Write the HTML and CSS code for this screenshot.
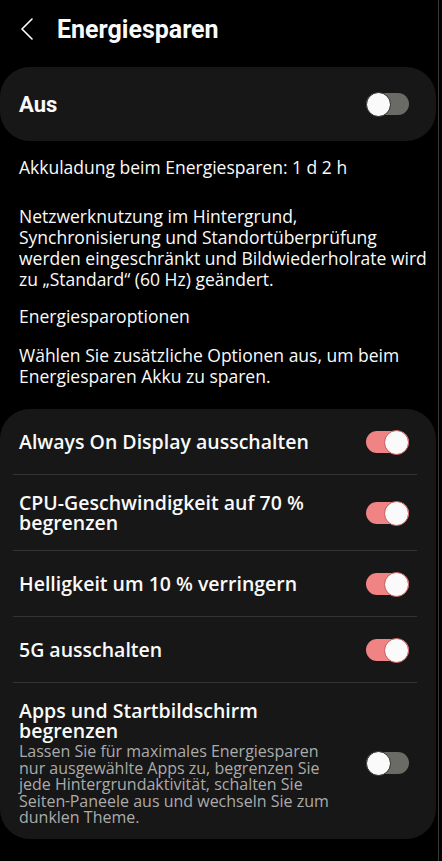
FILE: index.html
```html
<!DOCTYPE html>
<html lang="de">
<head>
  <meta charset="UTF-8" />
  <meta name="viewport" content="width=device-width, initial-scale=1.0" />
  <title>Energiesparen</title>
  <link rel="stylesheet" href="styles.css">
</head>
<body>
  <div class="screen">
    <header class="topbar">
      <svg class="back" width="14" height="22" viewBox="0 0 14 22">
        <path d="M12 1 L2 11 L12 21" fill="none" stroke="#fff" stroke-width="1.6" stroke-linecap="round" stroke-linejoin="round"/>
      </svg>
      <h1>Energiesparen</h1>
    </header>

    <div class="card master">
      <span class="master-label">Aus</span>
      <span class="switch"></span>
    </div>

    <div class="info">
      <p class="charge">Akkuladung beim Energiesparen: 1 d 2 h</p>
      <p class="desc">Netzwerknutzung im Hintergrund, Synchronisierung und Standortüberprüfung werden eingeschränkt und Bildwiederholrate wird zu „Standard“ (60 Hz) geändert.</p>
      <p class="heading">Energiesparoptionen</p>
      <p>Wählen Sie zusätzliche Optionen aus, um beim Energiesparen Akku zu sparen.</p>
    </div>

    <div class="card options">
      <div class="row">
        <div class="row-text"><div class="row-title">Always On Display ausschalten</div></div>
        <span class="switch on"></span>
      </div>
      <div class="row">
        <div class="row-text"><div class="row-title">CPU-Geschwindigkeit auf 70 % begrenzen</div></div>
        <span class="switch on"></span>
      </div>
      <div class="row">
        <div class="row-text"><div class="row-title">Helligkeit um 10 % verringern</div></div>
        <span class="switch on"></span>
      </div>
      <div class="row">
        <div class="row-text"><div class="row-title">5G ausschalten</div></div>
        <span class="switch on"></span>
      </div>
      <div class="row last">
        <div class="row-text">
          <div class="row-title">Apps und Startbildschirm begrenzen</div>
          <div class="row-sub">Lassen Sie für maximales Energiesparen nur ausgewählte Apps zu, begrenzen Sie jede Hintergrundaktivität, schalten Sie Seiten&#8209;Paneele aus und wechseln Sie zum dunklen Theme.</div>
        </div>
        <span class="switch"></span>
      </div>
    </div>
  </div>
</body>
</html>
```

FILE: styles.css
```css
body {
  margin: 0;
  padding: 0;
  background: #000;
  color: #fafafa;
  font-family: "Open Sans", Roboto, sans-serif;
}

.screen {
  width: 439px;
  min-height: 861px;
  border-right: 1px solid #3a3a3a;
  box-sizing: border-box;
}

.topbar {
  display: flex;
  align-items: center;
  height: 58px;
  padding-left: 20px;
}

.back {
  display: block;
  margin-right: 23px;
}

.topbar h1 {
  margin: 0;
  font-family: Roboto, sans-serif;
  font-size: 25px;
  font-weight: 700;
}

.card {
  background: #171717;
  border-radius: 30px;
  width: 436px;
}

.master {
  display: flex;
  align-items: center;
  justify-content: space-between;
  height: 74px;
  margin-top: 9px;
  padding: 0 27px 0 19px;
  box-sizing: border-box;
}

.master-label {
  font-family: Roboto, sans-serif;
  font-size: 22px;
  font-weight: 700;
}

.info {
  padding: 16px 2px 22px 19px;
  font-size: 17.5px;
  line-height: 21px;
}

.info p {
  margin: 0;
}

.info .charge {
  margin-bottom: 28px;
}

.info .desc {
  margin-bottom: 16px;
}

.info .heading {
  margin-bottom: 18px;
}

.row {
  display: flex;
  align-items: center;
  justify-content: space-between;
  min-height: 66px;
  padding: 18px 27px 18px 19px;
  box-sizing: border-box;
  position: relative;
}

.row::after {
  content: "";
  position: absolute;
  left: 13px;
  right: 19px;
  bottom: 0;
  height: 1px;
  background: #333;
}

.row.last::after {
  display: none;
}

.row.last {
  padding-top: 18px;
  padding-bottom: 13px;
}

.row-text {
  width: 320px;
}

.row-title {
  font-size: 19.5px;
  font-weight: 600;
  line-height: 20px;
}

.row-sub {
  max-width: 316px;
  margin-top: 2px;
  font-size: 16px;
  line-height: 16.5px;
  color: #ababab;
}

.switch {
  position: relative;
  flex: none;
  width: 43px;
  height: 22px;
  border-radius: 11px;
  background: #6b6b66;
}

.switch::before {
  content: "";
  position: absolute;
  top: -1.5px;
  left: 0;
  width: 25px;
  height: 25px;
  border-radius: 50%;
  background: #fafafa;
  box-sizing: border-box;
  border: 1px solid #2a2a2a;
}

.switch.on {
  background: #f08383;
}

.switch.on::before {
  left: auto;
  right: 0;
  border-color: #c35858;
}
```
